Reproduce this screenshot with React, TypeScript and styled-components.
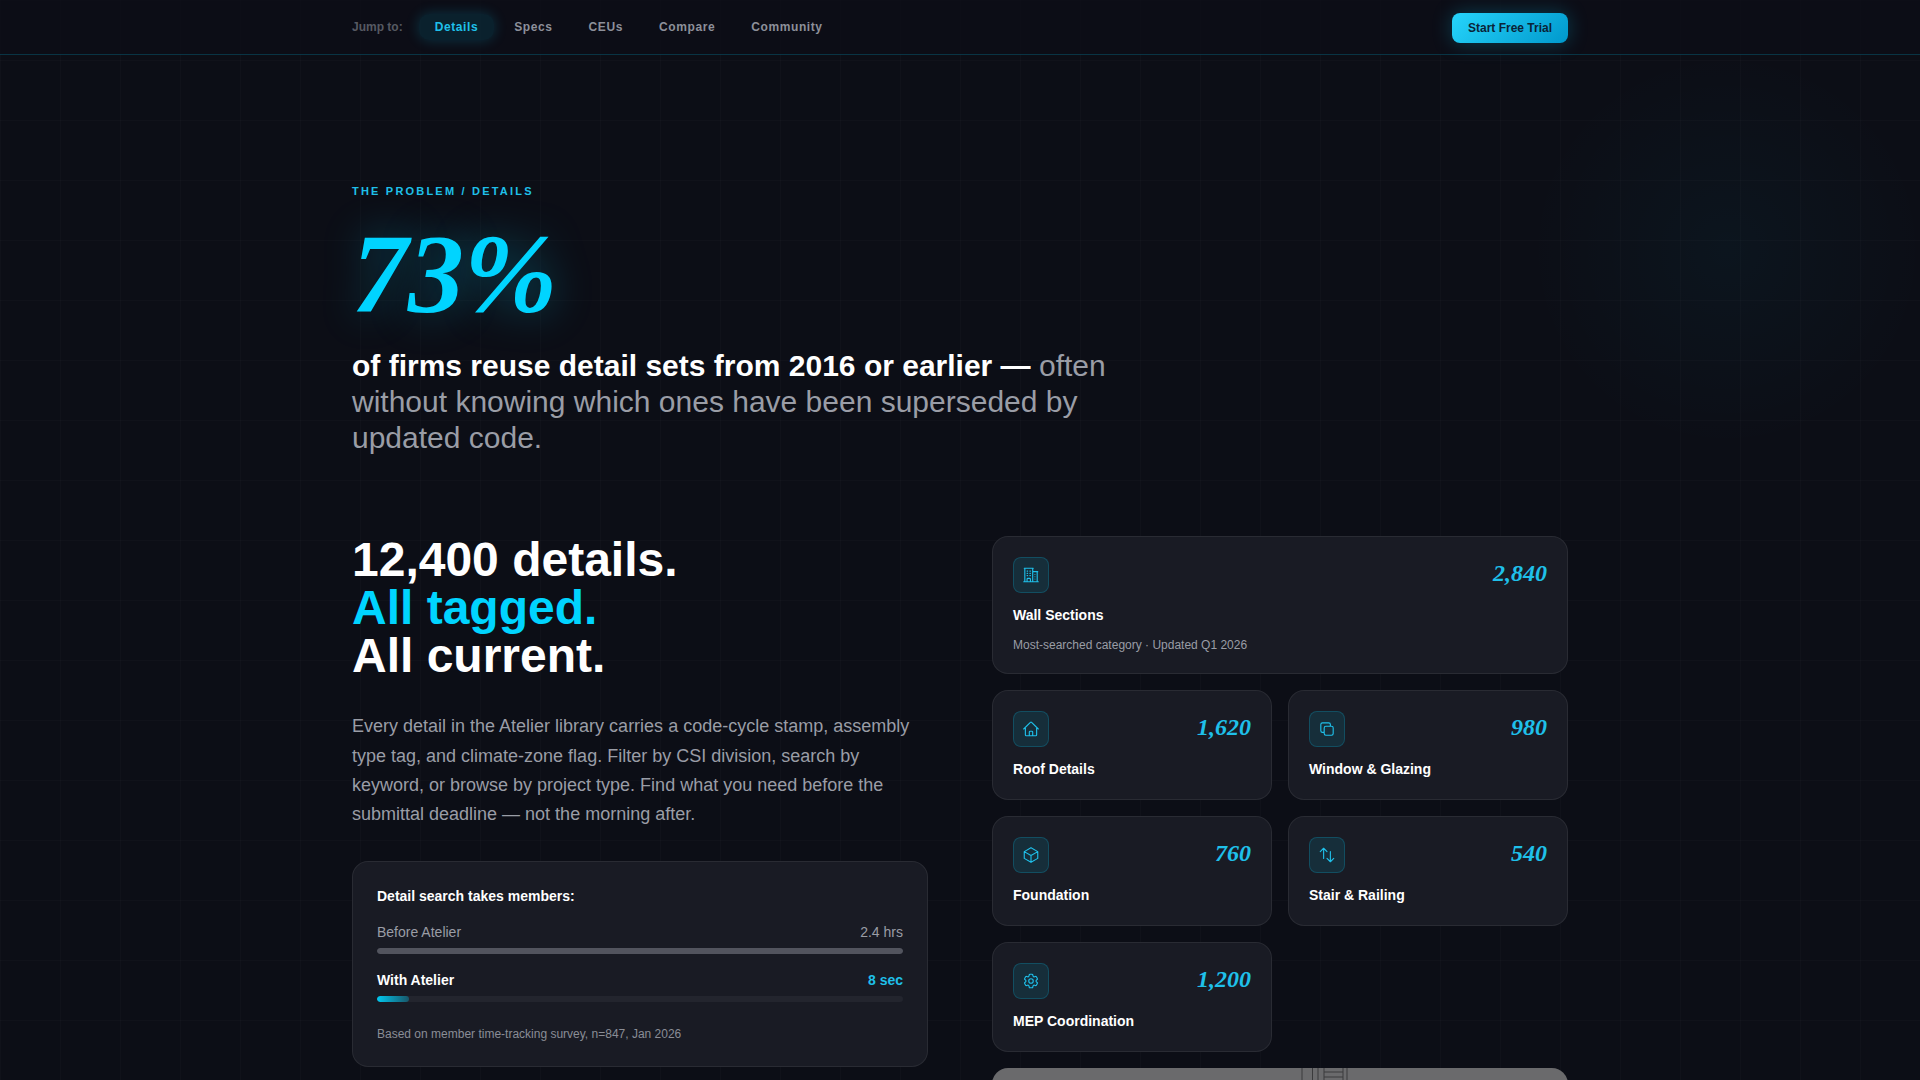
import { createGlobalStyle } from "styled-components";
import styled from "styled-components";
import {
  HiOutlineArrowsUpDown,
  HiOutlineBuildingOffice2,
  HiOutlineCog6Tooth,
  HiOutlineCube,
  HiOutlineHome,
  HiOutlineSquare2Stack,
} from "react-icons/hi2";

const GlobalStyle = createGlobalStyle`
  html, body {
    margin: 0;
    height: 1080px;
    overflow: hidden;
    background-color: #0c0e16;
  }

  * {
    box-sizing: border-box;
  }

  #root {
    font-family: "Liberation Sans", Arial, sans-serif;
    color: #ffffff;
  }
`;

const Page = styled.div`
  position: relative;
  height: 1080px;
  overflow: hidden;
  background-color: #0c0e16;
  background-image:
    radial-gradient(circle 200px at 1727px 250px, rgba(0, 212, 255, 0.035), transparent),
    linear-gradient(rgba(255, 255, 255, 0.016) 1px, transparent 1px),
    linear-gradient(90deg, rgba(255, 255, 255, 0.016) 1px, transparent 1px);
  background-size: 100% 100%, 60px 60px, 60px 60px;
`;

const TopBar = styled.nav`
  height: 55px;
  border-bottom: 1px solid rgba(0, 212, 255, 0.2);
  background-color: rgba(12, 14, 22, 0.8);
`;

const TopBarInner = styled.div`
  width: 1280px;
  height: 54px;
  margin: 0 auto;
  padding: 0 32px;
  display: flex;
  align-items: center;
  justify-content: space-between;
`;

const JumpLinks = styled.div`
  display: flex;
  align-items: center;
  gap: 4px;
`;

const JumpLabel = styled.span`
  margin-right: 12px;
  font-size: 12px;
  font-weight: 700;
  color: #565962;
`;

const JumpLink = styled.a<{ $active?: boolean }>`
  padding: 6px 16px;
  border-radius: 10px;
  font-size: 12px;
  font-weight: 700;
  letter-spacing: 0.6px;
  color: ${(p) => (p.$active ? "#1fc0ea" : "#8d909a")};
  background-color: ${(p) => (p.$active ? "rgba(0, 212, 255, 0.1)" : "transparent")};
  box-shadow: ${(p) => (p.$active ? "0 0 14px rgba(0, 212, 255, 0.2)" : "none")};
`;

const TrialButton = styled.button`
  width: 116px;
  height: 30px;
  margin-top: 2px;
  padding: 0;
  border: none;
  border-radius: 8px;
  font-family: inherit;
  font-size: 12px;
  font-weight: 700;
  color: #0a2438;
  background: linear-gradient(135deg, #26d4fb, #0098cc);
  box-shadow: 0 0 20px rgba(0, 212, 255, 0.25);
`;

const Main = styled.main`
  width: 1280px;
  margin: 0 auto;
  padding: 130px 32px 0;
`;

const Eyebrow = styled.div`
  font-size: 11px;
  line-height: 12px;
  font-weight: 700;
  letter-spacing: 2.2px;
  color: #1fc0ea;
`;

const BigStat = styled.div`
  margin-top: 21px;
  font-family: "Liberation Serif", "Times New Roman", serif;
  font-style: italic;
  font-weight: 700;
  font-size: 112px;
  line-height: 112px;
  color: #00d4ff;
  text-shadow: 0 0 40px rgba(0, 212, 255, 0.35);
`;

const Lead = styled.p`
  width: 768px;
  margin: 18px 0 0;
  font-size: 30px;
  line-height: 36px;
  color: #9a9da6;

  strong {
    color: #ffffff;
  }
`;

const Columns = styled.div`
  display: grid;
  grid-template-columns: 576px 576px;
  gap: 64px;
  margin-top: 80px;
`;

const Headline = styled.h2`
  margin: 0;
  font-size: 48px;
  line-height: 48px;
  font-weight: 700;

  span {
    display: block;
  }
`;

const HeadlineAccent = styled.span`
  color: #00d4ff;
`;

const Body = styled.p`
  margin: 32.3px 0 0;
  font-size: 18px;
  line-height: 29.25px;
  color: #9a9da6;
`;

const SearchCard = styled.div`
  margin-top: 31.7px;
  padding: 24px;
  border: 1px solid rgba(255, 255, 255, 0.07);
  border-radius: 16px;
  background-color: #191b24;
`;

const SearchTitle = styled.div`
  font-size: 14px;
  line-height: 20px;
  font-weight: 700;
  margin-bottom: 16px;
`;

const BarRow = styled.div<{ $strong?: boolean }>`
  display: flex;
  justify-content: space-between;
  font-size: 14px;
  line-height: 20px;
  font-weight: ${(p) => (p.$strong ? 700 : 400)};
  color: ${(p) => (p.$strong ? "#ffffff" : "#9a9da6")};
  margin-bottom: 6px;
`;

const BarValue = styled.span<{ $accent?: boolean }>`
  color: ${(p) => (p.$accent ? "#1fc0ea" : "inherit")};
`;

const BarTrack = styled.div`
  height: 6px;
  margin-bottom: 16px;
  border-radius: 3px;
  overflow: hidden;
  background-color: #23252e;

  &:last-of-type {
    margin-bottom: 0;
  }
`;

const BarFill = styled.div<{ $accent?: boolean }>`
  height: 100%;
  border-radius: 3px;
  background: ${(p) =>
    p.$accent ? "linear-gradient(90deg, #00c8f0, rgba(0, 200, 240, 0.3))" : "#52545e"};
`;

const SearchNote = styled.div`
  margin-top: 24px;
  font-size: 12px;
  line-height: 16px;
  color: #8a8d96;
`;

const CategoryGrid = styled.div`
  display: grid;
  grid-template-columns: 1fr 1fr;
  gap: 16px;
  align-content: start;
`;

const CategoryCard = styled.div<{ $wide?: boolean }>`
  grid-column: ${(p) => (p.$wide ? "span 2" : "auto")};
  padding: 20px;
  border: 1px solid rgba(255, 255, 255, 0.07);
  border-radius: 16px;
  background-color: #191b24;
`;

const CardTop = styled.div`
  display: flex;
  justify-content: space-between;
  align-items: flex-start;
  margin-bottom: 12px;
`;

const IconTile = styled.div`
  width: 36px;
  height: 36px;
  display: flex;
  align-items: center;
  justify-content: center;
  border: 1px solid rgba(0, 212, 255, 0.2);
  border-radius: 8px;
  background-color: rgba(0, 212, 255, 0.1);
  color: #1fc0ea;
`;

const CardCount = styled.div`
  font-family: "Liberation Serif", "Times New Roman", serif;
  font-style: italic;
  font-weight: 700;
  font-size: 24px;
  line-height: 32px;
  color: #1fc0ea;
`;

const CardName = styled.div`
  font-size: 14px;
  line-height: 20px;
  font-weight: 700;
`;

const CardNote = styled.div`
  margin-top: 12px;
  font-size: 12px;
  line-height: 16px;
  color: #9a9da6;
`;

const Preview = styled.div`
  grid-column: span 2;
  height: 200px;
  border-radius: 16px;
  overflow: hidden;
  background-color: #6a6a6c;
`;

const categories = [
  { name: "Roof Details", count: "1,620", icon: HiOutlineHome },
  { name: "Window & Glazing", count: "980", icon: HiOutlineSquare2Stack },
  { name: "Foundation", count: "760", icon: HiOutlineCube },
  { name: "Stair & Railing", count: "540", icon: HiOutlineArrowsUpDown },
  { name: "MEP Coordination", count: "1,200", icon: HiOutlineCog6Tooth },
];

const App = () => {
  return (
    <Page>
      <GlobalStyle />
      <TopBar>
        <TopBarInner>
          <JumpLinks>
            <JumpLabel>Jump to:</JumpLabel>
            <JumpLink $active>Details</JumpLink>
            <JumpLink>Specs</JumpLink>
            <JumpLink>CEUs</JumpLink>
            <JumpLink>Compare</JumpLink>
            <JumpLink>Community</JumpLink>
          </JumpLinks>
          <TrialButton>Start Free Trial</TrialButton>
        </TopBarInner>
      </TopBar>
      <Main>
        <Eyebrow>THE PROBLEM / DETAILS</Eyebrow>
        <BigStat>73%</BigStat>
        <Lead>
          <strong>of firms reuse detail sets from 2016 or earlier —</strong> often
          without knowing which ones have been superseded by updated code.
        </Lead>
        <Columns>
          <div>
            <Headline>
              <span>12,400 details.</span>
              <HeadlineAccent>All tagged.</HeadlineAccent>
              <span>All current.</span>
            </Headline>
            <Body>
              Every detail in the Atelier library carries a code-cycle stamp, assembly
              type tag, and climate-zone flag. Filter by CSI division, search by keyword,
              or browse by project type. Find what you need before the submittal
              deadline — not the morning after.
            </Body>
            <SearchCard>
              <SearchTitle>Detail search takes members:</SearchTitle>
              <BarRow>
                <span>Before Atelier</span>
                <BarValue>2.4 hrs</BarValue>
              </BarRow>
              <BarTrack>
                <BarFill style={{ width: "100%" }} />
              </BarTrack>
              <BarRow $strong>
                <span>With Atelier</span>
                <BarValue $accent>8 sec</BarValue>
              </BarRow>
              <BarTrack>
                <BarFill $accent style={{ width: "6%" }} />
              </BarTrack>
              <SearchNote>Based on member time-tracking survey, n=847, Jan 2026</SearchNote>
            </SearchCard>
          </div>
          <CategoryGrid>
            <CategoryCard $wide>
              <CardTop>
                <IconTile>
                  <HiOutlineBuildingOffice2 size={18} />
                </IconTile>
                <CardCount>2,840</CardCount>
              </CardTop>
              <CardName>Wall Sections</CardName>
              <CardNote>Most-searched category · Updated Q1 2026</CardNote>
            </CategoryCard>
            {categories.map((category) => (
              <CategoryCard key={category.name}>
                <CardTop>
                  <IconTile>
                    <category.icon size={18} />
                  </IconTile>
                  <CardCount>{category.count}</CardCount>
                </CardTop>
                <CardName>{category.name}</CardName>
              </CategoryCard>
            ))}
            <Preview>
              {/* top of the detail drawing, only its first pixels show above the fold */}
              <svg width="576" height="200" viewBox="0 0 576 200" fill="none" stroke="#3a3a3c">
                <path d="M310 0v12M320.500 0v12M326 0v12M332 0v12M351 0v12M355 0v12" />
                <path d="M332 4h19M332 9h19" />
              </svg>
            </Preview>
          </CategoryGrid>
        </Columns>
      </Main>
    </Page>
  );
};

export default App;
